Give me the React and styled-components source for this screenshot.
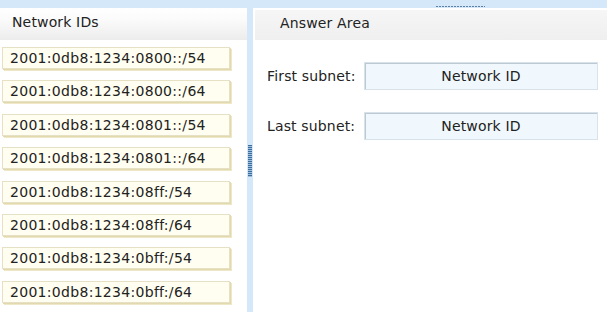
import React from "react";
import styled, { createGlobalStyle } from "styled-components";

const Global = createGlobalStyle`
  html, body { margin: 0; padding: 0; background: #fff; }
  body { font-family: "DejaVu Sans", Verdana, sans-serif; color: #222; }
`;

const Page = styled.div`
  width: 607px;
  height: 312px;
  display: flex;
  flex-direction: column;
  overflow: hidden;
`;

const TopBar = styled.div`
  height: 8px;
  flex: none;
  background: #d5e8fa;
  display: flex;
  padding-left: 436px;
`;

const TopGrip = styled.div`
  width: 49px;
  height: 1px;
  margin-top: 6px;
  background-image: repeating-linear-gradient(
    to right,
    #5b7fa8 0 2px,
    transparent 2px 3px
  );
`;

const Main = styled.div`
  flex: 1;
  display: flex;
  min-height: 0;
`;

const LeftPanel = styled.div`
  width: 247px;
  flex: none;
  display: flex;
  flex-direction: column;
`;

const PanelHeader = styled.div`
  height: ${(p) => p.$h}px;
  margin-top: ${(p) => p.$mt || 0}px;
  margin-left: ${(p) => p.$ml || 0}px;
  padding-left: ${(p) => p.$pl}px;
  display: flex;
  align-items: center;
  font-size: 14px;
  letter-spacing: 0.15px;
  color: #222;
  background: ${(p) =>
    p.$fade
      ? "linear-gradient(to bottom, #ffffff 0%, #fbfbfb 35%, #ececec 100%)"
      : "linear-gradient(to bottom, #f6f6f6 0%, #efefef 100%)"};
  padding-bottom: 4px;
  box-sizing: border-box;
`;

const ItemList = styled.div`
  display: flex;
  flex-direction: column;
  gap: 11.4px;
  padding: 7px 0 0 2px;
`;

const Item = styled.div`
  width: 228px;
  height: 22px;
  box-sizing: border-box;
  border: 1px solid #e6e1c4;
  background: #fffef0;
  box-shadow: 1px 1px 0 #e2d9ae, 2px 2px 0 #efe8c8;
  display: flex;
  align-items: center;
  padding-left: 7px;
  font-size: 14px;
  letter-spacing: 0.3px;
  color: #222;
`;

const Divider = styled.div`
  width: 6px;
  flex: none;
  background: #d5e8fa;
  display: flex;
  justify-content: center;
  padding-top: 137px;
  box-sizing: border-box;
`;

const SideGrip = styled.div`
  width: 4px;
  height: 32px;
  background-image: repeating-linear-gradient(
    to bottom,
    #3d6c9e 0 1px,
    #9fbfdf 1px 2px
  );
`;

const RightPanel = styled.div`
  flex: 1;
  display: flex;
  flex-direction: column;
`;

const Form = styled.div`
  display: flex;
  flex-direction: column;
  gap: 22px;
  padding: 22px 0 0 14px;
`;

const Row = styled.div`
  display: flex;
  align-items: center;
`;

const Label = styled.div`
  width: 97px;
  font-size: 14px;
  letter-spacing: 0.15px;
  color: #222;
`;

const Drop = styled.div`
  width: 234px;
  height: 28px;
  box-sizing: border-box;
  border: 1px solid #d7e2ea;
  box-shadow: inset 1px 1px 0 #bcc8d2;
  background: #f0f8fd;
  display: flex;
  align-items: center;
  justify-content: center;
  font-size: 14px;
  letter-spacing: 0.15px;
  color: #222;
`;

const ids = [
  "2001:0db8:1234:0800::/54",
  "2001:0db8:1234:0800::/64",
  "2001:0db8:1234:0801::/54",
  "2001:0db8:1234:0801::/64",
  "2001:0db8:1234:08ff:/54",
  "2001:0db8:1234:08ff:/64",
  "2001:0db8:1234:0bff:/54",
  "2001:0db8:1234:0bff:/64",
];

export default function App() {
  return (
    <>
      <Global />
      <Page>
        <TopBar>
          <TopGrip />
        </TopBar>
        <Main>
          <LeftPanel>
            <PanelHeader $h={32} $pl={12} $fade>
              Network IDs
            </PanelHeader>
            <ItemList>
              {ids.map((t) => (
                <Item key={t}>{t}</Item>
              ))}
            </ItemList>
          </LeftPanel>
          <Divider>
            <SideGrip />
          </Divider>
          <RightPanel>
            <PanelHeader $h={30} $mt={2} $ml={2} $pl={25}>
              Answer Area
            </PanelHeader>
            <Form>
              <Row>
                <Label>First subnet:</Label>
                <Drop>Network ID</Drop>
              </Row>
              <Row>
                <Label>Last subnet:</Label>
                <Drop>Network ID</Drop>
              </Row>
            </Form>
          </RightPanel>
        </Main>
      </Page>
    </>
  );
}
